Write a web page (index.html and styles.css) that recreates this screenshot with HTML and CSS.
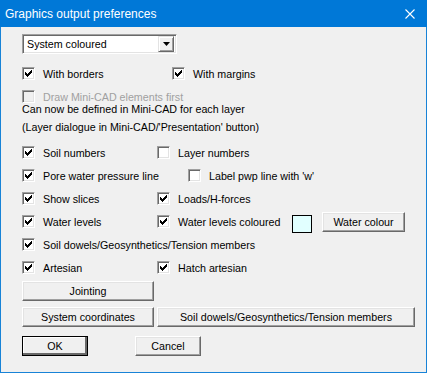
FILE: index.html
```html
<!DOCTYPE html>
<html lang="en">
<head>
    <meta charset="UTF-8">
    <title>Graphics output preferences</title>
    <link rel="stylesheet" href="styles.css">
</head>
<body>
    <div class="dialog">
        <div class="title-bar">
            <span class="title">Graphics output preferences</span>
            <svg class="close" width="10" height="10" viewBox="0 0 10 10">
                <path d="M0.5 0.5 L9.5 9.5 M9.5 0.5 L0.5 9.5" stroke="#fff" stroke-width="1.1" fill="none"/>
            </svg>
        </div>

        <div class="content">
            <div class="combo">
                <span class="combo-text">System coloured</span>
                <span class="combo-btn">
                    <svg width="7" height="4" viewBox="0 0 7 4"><path d="M0 0 H7 L3.5 4 Z" fill="#000"/></svg>
                </span>
            </div>

            <div class="row row-top">
                <label class="check w150"><span class="box on"></span>With borders</label>
                <label class="check"><span class="box on"></span>With margins</label>
            </div>
            <div class="row">
                <label class="check disabled"><span class="box"></span>Draw Mini-CAD elements first</label>
            </div>
            <div class="note">
                Can now be defined in Mini-CAD for each layer<br>
                (Layer dialogue in Mini-CAD/'Presentation' button)
            </div>

            <div class="row row-gap">
                <label class="check w135"><span class="box on"></span>Soil numbers</label>
                <label class="check"><span class="box"></span>Layer numbers</label>
            </div>
            <div class="row">
                <label class="check w166"><span class="box on"></span>Pore water pressure line</label>
                <label class="check"><span class="box"></span>Label pwp line with 'w'</label>
            </div>
            <div class="row">
                <label class="check w135"><span class="box on"></span>Show slices</label>
                <label class="check"><span class="box on"></span>Loads/H-forces</label>
            </div>
            <div class="row">
                <label class="check w135"><span class="box on"></span>Water levels</label>
                <label class="check w135"><span class="box on"></span>Water levels coloured</label>
                <span class="swatch"></span>
                <button class="btn btn-colour">Water colour</button>
            </div>
            <div class="row">
                <label class="check"><span class="box on"></span>Soil dowels/Geosynthetics/Tension members</label>
            </div>
            <div class="row">
                <label class="check w135"><span class="box on"></span>Artesian</label>
                <label class="check"><span class="box on"></span>Hatch artesian</label>
            </div>

            <div class="btn-row btn-row-first">
                <button class="btn btn-wide">Jointing</button>
            </div>
            <div class="btn-row btn-row-second">
                <button class="btn btn-wide">System coordinates</button>
                <button class="btn btn-long">Soil dowels/Geosynthetics/Tension members</button>
            </div>
            <div class="btn-row btn-row-last">
                <button class="btn btn-small btn-default">OK</button>
                <button class="btn btn-small btn-cancel">Cancel</button>
            </div>
        </div>
    </div>
</body>
</html>
```

FILE: styles.css
```css
body {
    margin: 0;
    padding: 0;
    font-family: 'Liberation Sans', Arial, sans-serif;
    font-size: 10.7px;
    color: #000;
    background: #f0f0f0;
}

.dialog {
    width: 427px;
    height: 373px;
    box-sizing: border-box;
    border: 1px solid #1883d7;
    border-top: none;
    background: #f0f0f0;
}

.title-bar {
    height: 27px;
    margin: 0 -1px;
    background: #0078d7;
    color: #fff;
    display: flex;
    align-items: center;
    justify-content: space-between;
    padding: 0 12px 0 5px;
}
.title {
    font-size: 12px;
}
.close {
    display: block;
}

.content {
    padding: 7px 0 0 21px;
}

.combo {
    width: 155px;
    height: 20px;
    box-sizing: border-box;
    background: #fff;
    border-top: 1px solid #a0a0a0;
    border-left: 1px solid #a0a0a0;
    border-right: 1px solid #fff;
    border-bottom: 1px solid #fff;
    box-shadow: inset 1px 1px 0 #696969, inset -1px -1px 0 #e3e3e3;
    display: flex;
    align-items: center;
    justify-content: space-between;
    padding: 2px;
}
.combo-text {
    padding-left: 2px;
}
.combo-btn {
    width: 16px;
    height: 16px;
    box-sizing: border-box;
    background: #f0f0f0;
    border-top: 1px solid #e3e3e3;
    border-left: 1px solid #e3e3e3;
    border-right: 1px solid #696969;
    border-bottom: 1px solid #696969;
    box-shadow: inset 1px 1px 0 #fff, inset -1px -1px 0 #a0a0a0;
    display: flex;
    align-items: center;
    justify-content: center;
}
.combo-btn svg {
    display: block;
}

.row {
    height: 23px;
    display: flex;
    align-items: center;
}
.row-top {
    margin-top: 8px;
}
.row-gap {
    margin-top: 5px;
}

.check {
    display: flex;
    align-items: center;
    white-space: nowrap;
}
.w135 { width: 135px; }
.w150 { width: 150px; }
.w166 { width: 166px; }

.box {
    width: 13px;
    height: 13px;
    box-sizing: border-box;
    margin-right: 8px;
    background: #fff;
    border-top: 1px solid #a0a0a0;
    border-left: 1px solid #a0a0a0;
    border-right: 1px solid #fff;
    border-bottom: 1px solid #fff;
    box-shadow: inset 1px 1px 0 #696969, inset -1px -1px 0 #e3e3e3;
}
.box.on {
    background: #fff url("data:image/svg+xml,%3Csvg xmlns='http://www.w3.org/2000/svg' width='11' height='11'%3E%3Cpath d='M2 4h1v1h1v1h1V5h1V4h1V3h1V2h1v3H8v1H7v1H6v1H5v1H4V8H3V7H2z' fill='%23000'/%3E%3C/svg%3E") no-repeat center;
}
.disabled {
    color: #a0a0a0;
}
.disabled .box {
    background: #f0f0f0;
}

.note {
    margin-top: -8px;
    line-height: 18px;
}

.swatch {
    width: 20px;
    height: 18px;
    box-sizing: border-box;
    border: 1px solid #000;
    background: #e1ffff;
    margin-top: 4px;
}

.btn {
    font-family: inherit;
    font-size: 10.7px;
    color: #000;
    height: 20px;
    padding: 0;
    box-sizing: border-box;
    background: #f0f0f0;
    border-top: 1px solid #fff;
    border-left: 1px solid #fff;
    border-right: 1px solid #696969;
    border-bottom: 1px solid #696969;
    box-shadow: inset -1px -1px 0 #a0a0a0, inset 1px 1px 0 #e3e3e3;
    cursor: pointer;
}
.btn-colour {
    width: 83px;
    margin-left: 10px;
    margin-top: 1px;
}
.btn-wide {
    width: 132px;
}
.btn-long {
    width: 258px;
    margin-left: 3px;
}
.btn-small {
    width: 66px;
}
.btn-default {
    outline: 1px solid #000;
    outline-offset: -1px;
    border-top-color: #fff;
    box-shadow: inset -2px -2px 0 #696969, inset 1px 1px 0 #fff;
}
.btn-cancel {
    margin-left: 47px;
}

.btn-row {
    display: flex;
}
.btn-row-first {
    margin-top: 2px;
}
.btn-row-second {
    margin-top: 6px;
}
.btn-row-last {
    margin-top: 9px;
}
```
